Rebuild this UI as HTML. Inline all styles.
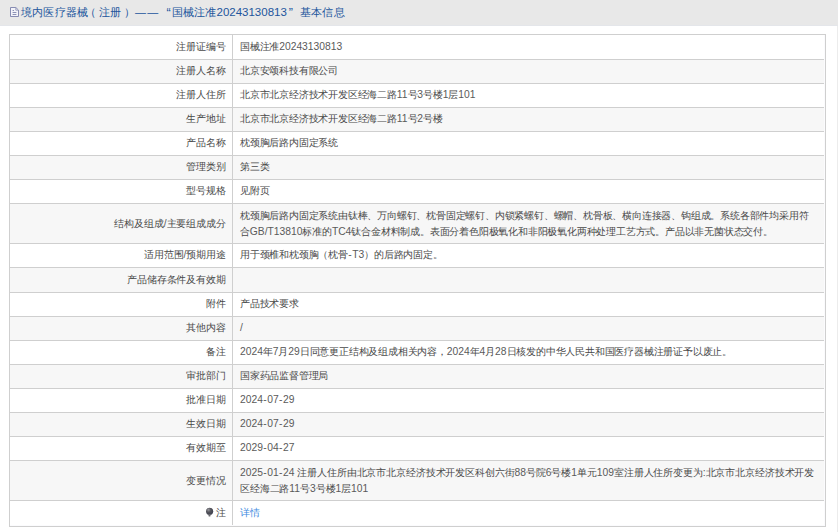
<!DOCTYPE html>
<html><head><meta charset="utf-8">
<style>
html,body{margin:0;padding:0;}
body{width:838px;height:532px;overflow:hidden;position:relative;background:#fff;font-family:"Liberation Sans",sans-serif;color:#494949;}
.hd{position:absolute;left:0;top:0;width:838px;height:25px;background:#e8e8e8;border-bottom:1px solid #e4e6ea;}
.hd .t{position:absolute;left:21px;top:0;height:25px;line-height:25px;font-size:11.2px;color:#1e4d93;white-space:nowrap;}
.hd .p{position:absolute;top:0;height:25px;line-height:25px;font-size:11px;letter-spacing:0.2px;color:#22559c;white-space:nowrap;}
.hd .n2{font-size:11.5px;letter-spacing:0;}
.rb{position:absolute;left:837px;top:26px;width:1px;height:506px;background:#ececec;}
.row{position:absolute;left:9px;width:815px;border:1px solid #cfcfcf;}
.g{background:#f7f7f7;}
.lab{position:absolute;left:0;width:216px;top:0;bottom:0;display:flex;align-items:flex-start;justify-content:flex-end;font-size:10px;letter-spacing:-0.1px;line-height:16px;white-space:nowrap;}
.val{position:absolute;left:230px;right:0;top:0;bottom:0;display:flex;align-items:flex-start;font-size:10px;letter-spacing:-0.2px;line-height:16px;white-space:nowrap;}
.vl{position:absolute;left:232px;top:34px;width:1px;height:491px;background:#cfcfcf;}
.gr{position:absolute;left:824px;top:35px;width:1px;height:491px;background:#fbfbfd;}
.gb{position:absolute;left:10px;top:525px;width:815px;height:1px;background:#fbfbfd;}
.n{font-size:10.3px;letter-spacing:0;color:#5a5a5a;}
.h{letter-spacing:0.5px;margin-left:0.4px;}
a{color:#3d8ae0;text-decoration:none;}
.ic{position:absolute;left:8px;top:5px;}
.bulb{display:inline-block;width:7px;height:7px;border-radius:50%;background:#555;position:relative;margin-right:1px;top:-1px;}
</style></head><body>
<div class="hd"><svg class="ic" width="14" height="14" viewBox="0 0 14 14"><path d="M2.5 2.5H7.9L10.5 5.1V11.5H2.5Z" fill="#f3f3f9" stroke="#7a80aa" stroke-width="0.9"/><path d="M7.8 3V5.2H10" fill="none" stroke="#8a90b4" stroke-width="0.8"/><path d="M4.6 5.5H6M4.6 7.5H8.4M4.6 9.5H8.4" stroke="#8086ab" stroke-width="0.9"/></svg>
<span class="p" style="left:21px">境内医疗器械</span><span class="p" style="left:84.5px">（</span><span class="p" style="left:99px">注册</span><span class="p" style="left:123.5px">）</span><span class="p" style="left:135px;letter-spacing:1.2px">——</span><span class="p" style="left:166.5px;font-size:12.5px;top:1px">“</span><span class="p" style="left:171.5px">国械注准</span><span class="p n2" style="left:216.5px">20243130813</span><span class="p" style="left:288.8px;font-size:12.5px;top:1px">”</span><span class="p" style="left:300px">基本信息</span></div>
<div class="rb"></div>
<div class="row" style="top:34px;height:24px"><div class="lab" style="top:4px">注册证编号</div><div class="val" style="top:4px"><div>国械注准<span class="n">20243130813</span></div></div></div>
<div class="row g" style="top:59px;height:23px"><div class="lab" style="top:3px">注册人名称</div><div class="val" style="top:3px"><div>北京安颂科技有限公司</div></div></div>
<div class="row" style="top:83px;height:23px"><div class="lab" style="top:3px">注册人住所</div><div class="val" style="top:3px"><div>北京市北京经济技术开发区经海二路<span class="n">11</span>号<span class="n">3</span>号楼<span class="n">1</span>层<span class="n">101</span></div></div></div>
<div class="row g" style="top:107px;height:23px"><div class="lab" style="top:3px">生产地址</div><div class="val" style="top:3px"><div>北京市北京经济技术开发区经海二路<span class="n">11</span>号<span class="n">2</span>号楼</div></div></div>
<div class="row" style="top:131px;height:23px"><div class="lab" style="top:3px">产品名称</div><div class="val" style="top:3px"><div>枕颈胸后路内固定系统</div></div></div>
<div class="row g" style="top:155px;height:23px"><div class="lab" style="top:3px">管理类别</div><div class="val" style="top:3px"><div>第三类</div></div></div>
<div class="row" style="top:179px;height:23px"><div class="lab" style="top:3px">型号规格</div><div class="val" style="top:3px"><div>见附页</div></div></div>
<div class="row g" style="top:203px;height:39px"><div class="lab" style="top:12px">结构及组成<span class="n">/</span>主要组成成分</div><div class="val" style="top:4px"><div>枕颈胸后路内固定系统由钛棒、万向螺钉、枕骨固定螺钉、内锁紧螺钉、螺帽、枕骨板、横向连接器、钩组成。系统各部件均采用符<br>合<span class="n">GB/T13810</span>标准的<span class="n">TC4</span>钛合金材料制成。表面分着色阳极氧化和非阳极氧化两种处理工艺方式。产品以非无菌状态交付。</div></div></div>
<div class="row" style="top:243px;height:23px"><div class="lab" style="top:3px">适用范围<span class="n">/</span>预期用途</div><div class="val" style="top:3px"><div>用于颈椎和枕颈胸（枕骨<span class="n"><span class="h">-</span>T3</span>）的后路内固定。</div></div></div>
<div class="row g" style="top:267px;height:24px"><div class="lab" style="top:4px">产品储存条件及有效期</div><div class="val" style="top:4px"><div></div></div></div>
<div class="row" style="top:292px;height:23px"><div class="lab" style="top:3px">附件</div><div class="val" style="top:3px"><div>产品技术要求</div></div></div>
<div class="row g" style="top:316px;height:23px"><div class="lab" style="top:3px">其他内容</div><div class="val" style="top:3px"><div><span class="n">/</span></div></div></div>
<div class="row" style="top:340px;height:23px"><div class="lab" style="top:3px">备注</div><div class="val" style="top:3px"><div><span class="n">2024</span>年<span class="n">7</span>月<span class="n">29</span>日同意更正结构及组成相关内容，<span class="n">2024</span>年<span class="n">4</span>月<span class="n">28</span>日核发的中华人民共和国医疗器械注册证予以废止。</div></div></div>
<div class="row g" style="top:364px;height:23px"><div class="lab" style="top:3px">审批部门</div><div class="val" style="top:3px"><div>国家药品监督管理局</div></div></div>
<div class="row" style="top:388px;height:23px"><div class="lab" style="top:3px">批准日期</div><div class="val" style="top:3px"><div><span class="n">2024<span class="h">-</span>07<span class="h">-</span>29</span></div></div></div>
<div class="row g" style="top:412px;height:23px"><div class="lab" style="top:3px">生效日期</div><div class="val" style="top:3px"><div><span class="n">2024<span class="h">-</span>07<span class="h">-</span>29</span></div></div></div>
<div class="row" style="top:436px;height:23px"><div class="lab" style="top:3px">有效期至</div><div class="val" style="top:3px"><div><span class="n">2029<span class="h">-</span>04<span class="h">-</span>27</span></div></div></div>
<div class="row g" style="top:460px;height:39px"><div class="lab" style="top:12px">变更情况</div><div class="val" style="top:4px;letter-spacing:-0.13px"><div><span class="n">2025<span class="h">-</span>01<span class="h">-</span>24 </span>注册人住所由北京市北京经济技术开发区科创六街<span class="n">88</span>号院<span class="n">6</span>号楼<span class="n">1</span>单元<span class="n">109</span>室注册人住所变更为<span class="n">:</span>北京市北京经济技术开发<br>区经海二路<span class="n">11</span>号<span class="n">3</span>号楼<span class="n">1</span>层<span class="n">101</span></div></div></div>
<div class="row" style="top:500px;height:25px"><div class="lab" style="top:4px">注</div><div class="val" style="top:4px"><a>详情</a></div><svg style="position:absolute;left:195px;top:6px" width="9" height="11" viewBox="0 0 9 11"><defs><radialGradient id="bg1" cx="0.35" cy="0.3" r="0.7"><stop offset="0" stop-color="#9a9aa0"/><stop offset="0.45" stop-color="#55555c"/><stop offset="1" stop-color="#3f4150"/></radialGradient></defs><circle cx="4.6" cy="4.3" r="3.6" fill="url(#bg1)"/><path d="M3.2 7H5.8L5.3 9.6H3.7Z" fill="#6a6a70"/></svg></div>
<div class="vl"></div><div class="gr"></div><div class="gb"></div>
</body></html>
